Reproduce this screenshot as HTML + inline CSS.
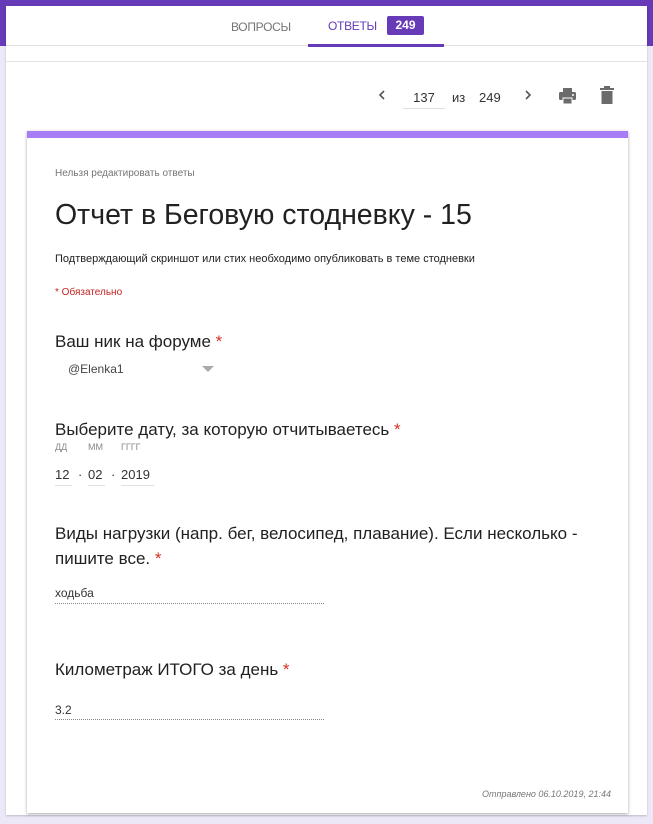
<!DOCTYPE html>
<html><head><meta charset="utf-8"><style>
*{margin:0;padding:0;box-sizing:border-box}
body{width:653px;height:824px;background:#ede8f7;position:relative;overflow:hidden;font-family:"Liberation Sans","DejaVu Sans",sans-serif;color:#212121}
.a{position:absolute;white-space:nowrap}
</style></head><body>
<div class="a" style="left:0;top:0;width:653px;height:46px;background:#673ab7"></div>
<div class="a" style="left:6px;top:6px;width:641px;height:809px;background:#fff;box-shadow:0 1px 2px rgba(0,0,0,.2)"></div>
<div class="a" style="left:6px;top:45px;width:641px;height:1px;background:#e0e0e0"></div>
<div class="a" style="left:6px;top:61px;width:641px;height:1px;background:#e3e3e3"></div>
<div class="a" style="left:231px;top:20px;font-size:12px;color:#757575;letter-spacing:-0.3px">ВОПРОСЫ</div>
<div class="a" style="left:328px;top:19px;font-size:12px;color:#673ab7;letter-spacing:-0.3px">ОТВЕТЫ</div>
<div class="a" style="left:387px;top:16px;width:37px;height:19px;background:#673ab7;border-radius:2px;color:#fff;font-size:12px;font-weight:bold;text-align:center;line-height:19px">249</div>
<div class="a" style="left:308px;top:44px;width:136px;height:3px;background:#673ab7"></div>
<svg class="a" style="left:375px;top:88px" width="14" height="14" viewBox="0 0 14 14"><path d="M9 3 L5 7 L9 11" fill="none" stroke="#555" stroke-width="1.6"/></svg>
<div class="a" style="left:403px;top:90px;width:42px;text-align:center;font-size:13px;color:#333">137</div>
<div class="a" style="left:403px;top:108px;width:42px;height:1px;background:#ddd"></div>
<div class="a" style="left:452px;top:90px;font-size:13px;color:#333">из</div>
<div class="a" style="left:479px;top:90px;font-size:13px;color:#333">249</div>
<svg class="a" style="left:521px;top:88px" width="14" height="14" viewBox="0 0 14 14"><path d="M5 3 L9 7 L5 11" fill="none" stroke="#555" stroke-width="1.6"/></svg>
<svg class="a" style="left:558px;top:87px" width="19" height="18" viewBox="0 0 19 18"><rect x="5" y="1" width="9" height="4" fill="#6b6b6b"/><rect x="1" y="5" width="17" height="8" rx="1.5" fill="#6b6b6b"/><rect x="5" y="11" width="9" height="6" fill="#6b6b6b" stroke="#fff" stroke-width="1"/><circle cx="15" cy="8" r="1" fill="#fff"/></svg>
<svg class="a" style="left:600px;top:86px" width="14" height="19" viewBox="0 0 14 19"><rect x="0" y="2" width="14" height="2" fill="#6b6b6b"/><rect x="4" y="0" width="6" height="3" fill="#6b6b6b"/><rect x="1.5" y="5" width="11" height="13" fill="#6b6b6b"/></svg>
<div class="a" style="left:27px;top:131px;width:601px;height:682px;background:#fff;box-shadow:0 1px 3px rgba(0,0,0,.35)"></div>
<div class="a" style="left:27px;top:131px;width:601px;height:7px;background:#a87cf6"></div>
<div class="a" style="left:55px;top:168px;font-size:10px;color:#757575">Нельзя редактировать ответы</div>
<div class="a" style="left:55px;top:199px;font-size:28.5px;color:#212121">Отчет в Беговую стодневку - 15</div>
<div class="a" style="left:55px;top:253px;font-size:11px;color:#212121">Подтверждающий скриншот или стих необходимо опубликовать в теме стодневки</div>
<div class="a" style="left:55px;top:287px;font-size:10px;color:#c5221f">* Обязательно</div>
<div class="a" style="left:55px;top:332px;font-size:17px">Ваш ник на форуме <span style="color:#d93025">*</span></div>
<div class="a" style="left:68px;top:362px;font-size:12px;color:#444">@Elenka1</div>
<svg class="a" style="left:202px;top:366px" width="12" height="7"><path d="M0 0 L12 0 L6 6Z" fill="#aaa"/></svg>
<div class="a" style="left:55px;top:420px;font-size:17px">Выберите дату, за которую отчитываетесь <span style="color:#d93025">*</span></div>
<div class="a" style="left:55px;top:442px;font-size:9px;color:#888">ДД</div>
<div class="a" style="left:88px;top:442px;font-size:9px;color:#888">ММ</div>
<div class="a" style="left:121px;top:442px;font-size:9px;color:#888">ГГГГ</div>
<div class="a" style="left:55px;top:467px;font-size:13px;color:#333">12</div>
<div class="a" style="left:55px;top:485px;width:17px;height:1px;background:#e0e0e0"></div>
<div class="a" style="left:78px;top:467px;font-size:13px;color:#333">·</div>
<div class="a" style="left:88px;top:467px;font-size:13px;color:#333">02</div>
<div class="a" style="left:88px;top:485px;width:17px;height:1px;background:#e0e0e0"></div>
<div class="a" style="left:111px;top:467px;font-size:13px;color:#333">·</div>
<div class="a" style="left:121px;top:467px;font-size:13px;color:#333">2019</div>
<div class="a" style="left:121px;top:485px;width:33px;height:1px;background:#e0e0e0"></div>
<div class="a" style="left:55px;top:521px;font-size:17px;line-height:25px;white-space:normal;width:560px">Виды нагрузки (напр. бег, велосипед, плавание). Если несколько - пишите все. <span style="color:#d93025">*</span></div>
<div class="a" style="left:55px;top:586px;font-size:12px;color:#333">ходьба</div>
<div class="a" style="left:55px;top:603px;width:269px;border-top:1px dotted #888"></div>
<div class="a" style="left:55px;top:660px;font-size:17px">Километраж ИТОГО за день <span style="color:#d93025">*</span></div>
<div class="a" style="left:55px;top:703px;font-size:12px;color:#333">3.2</div>
<div class="a" style="left:55px;top:719px;width:269px;border-top:1px dotted #888"></div>
<div class="a" style="left:482px;top:789px;font-size:9px;font-style:italic;color:#777">Отправлено 06.10.2019, 21:44</div>
</body></html>
